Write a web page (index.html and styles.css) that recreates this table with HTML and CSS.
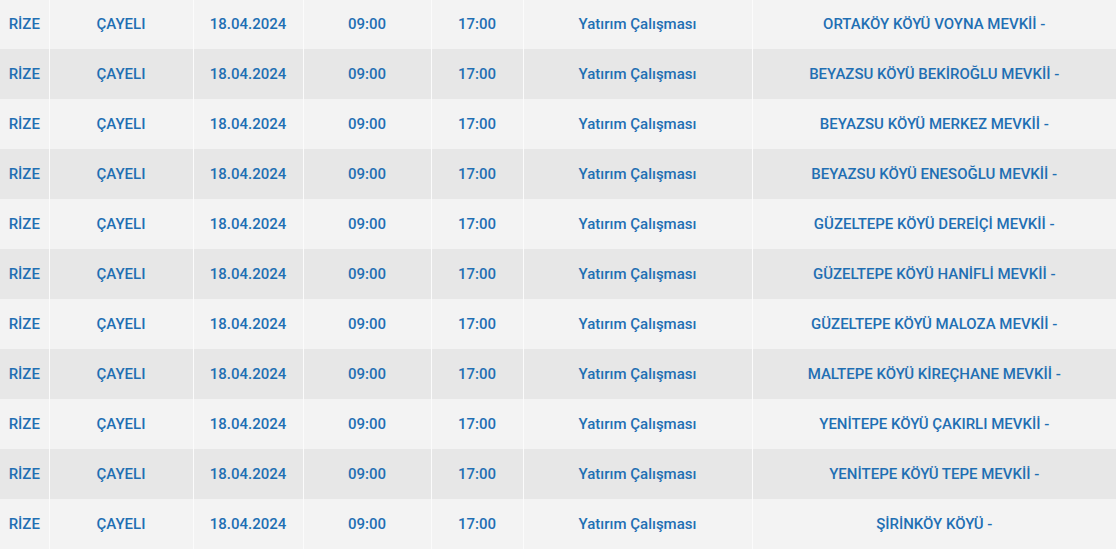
FILE: index.html
```html
<!DOCTYPE html>
<html lang="tr">
<head>
<meta charset="utf-8">
<link rel="stylesheet" href="styles.css">
</head>
<body>
<table class="outages">
<colgroup>
<col class="c1"><col class="c2"><col class="c3"><col class="c4"><col class="c5"><col class="c6"><col class="c7">
</colgroup>
<tbody>
<tr><td>RİZE</td><td>ÇAYELI</td><td>18.04.2024</td><td>09:00</td><td>17:00</td><td>Yatırım Çalışması</td><td>ORTAKÖY KÖYÜ VOYNA MEVKİİ -</td></tr>
<tr><td>RİZE</td><td>ÇAYELI</td><td>18.04.2024</td><td>09:00</td><td>17:00</td><td>Yatırım Çalışması</td><td>BEYAZSU KÖYÜ BEKİROĞLU MEVKİİ -</td></tr>
<tr><td>RİZE</td><td>ÇAYELI</td><td>18.04.2024</td><td>09:00</td><td>17:00</td><td>Yatırım Çalışması</td><td>BEYAZSU KÖYÜ MERKEZ MEVKİİ -</td></tr>
<tr><td>RİZE</td><td>ÇAYELI</td><td>18.04.2024</td><td>09:00</td><td>17:00</td><td>Yatırım Çalışması</td><td>BEYAZSU KÖYÜ ENESOĞLU MEVKİİ -</td></tr>
<tr><td>RİZE</td><td>ÇAYELI</td><td>18.04.2024</td><td>09:00</td><td>17:00</td><td>Yatırım Çalışması</td><td>GÜZELTEPE KÖYÜ DEREİÇİ MEVKİİ -</td></tr>
<tr><td>RİZE</td><td>ÇAYELI</td><td>18.04.2024</td><td>09:00</td><td>17:00</td><td>Yatırım Çalışması</td><td>GÜZELTEPE KÖYÜ HANİFLİ MEVKİİ -</td></tr>
<tr><td>RİZE</td><td>ÇAYELI</td><td>18.04.2024</td><td>09:00</td><td>17:00</td><td>Yatırım Çalışması</td><td>GÜZELTEPE KÖYÜ MALOZA MEVKİİ -</td></tr>
<tr><td>RİZE</td><td>ÇAYELI</td><td>18.04.2024</td><td>09:00</td><td>17:00</td><td>Yatırım Çalışması</td><td>MALTEPE KÖYÜ KİREÇHANE MEVKİİ -</td></tr>
<tr><td>RİZE</td><td>ÇAYELI</td><td>18.04.2024</td><td>09:00</td><td>17:00</td><td>Yatırım Çalışması</td><td>YENİTEPE KÖYÜ ÇAKIRLI MEVKİİ -</td></tr>
<tr><td>RİZE</td><td>ÇAYELI</td><td>18.04.2024</td><td>09:00</td><td>17:00</td><td>Yatırım Çalışması</td><td>YENİTEPE KÖYÜ TEPE MEVKİİ -</td></tr>
<tr><td>RİZE</td><td>ÇAYELI</td><td>18.04.2024</td><td>09:00</td><td>17:00</td><td>Yatırım Çalışması</td><td>ŞİRİNKÖY KÖYÜ -</td></tr>
</tbody>
</table>
</body>
</html>
```
FILE: styles.css
```css
html, body {
  margin: 0;
  padding: 0;
  background: #f3f3f3;
}
.outages {
  width: 1116px;
  margin-top: -1px;
  border-collapse: collapse;
  table-layout: fixed;
  font-family: Roboto, "Liberation Sans", sans-serif;
  font-weight: 500;
  font-size: 15px;
  color: #1f6fb3;
}
.c1 { width: 49px; }
.c2 { width: 144px; }
.c3 { width: 110px; }
.c4 { width: 128px; }
.c5 { width: 92px; }
.c6 { width: 229px; }
.c7 { width: 364px; }
.outages td {
  height: 50px;
  padding: 0;
  box-sizing: border-box;
  text-align: center;
  vertical-align: middle;
  border-left: 1px solid #fbfbfb;
  white-space: nowrap;
}
.outages td:first-child { border-left: none; }
.outages tr:nth-child(odd) { background: #f3f3f3; }
.outages tr:nth-child(even) { background: #e7e7e7; }
```
